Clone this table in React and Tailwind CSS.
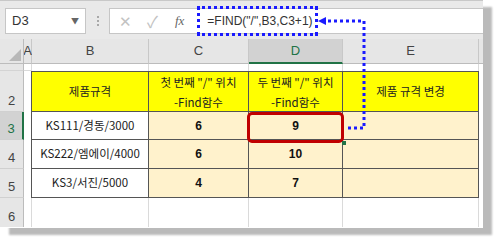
import React from 'react';

const font = { fontFamily: '"Noto Sans CJK KR", "Liberation Sans", sans-serif' };
const latin = { fontFamily: '"Liberation Sans", sans-serif' };

const cols = ['A', 'B', 'C', 'D', 'E'];
const rows = [
    { n: 2, h: 'h-[41px]' },
    { n: 3, h: 'h-[28px]' },
    { n: 4, h: 'h-[29px]' },
    { n: 5, h: 'h-[29px]' },
];

const data = [
    ['KS111/경동/3000', '6', '9'],
    ['KS222/엠에이/4000', '6', '10'],
    ['KS3/서진/5000', '4', '7'],
];

const App = () => {
    return (
        <div className="relative w-[500px] h-[241px] bg-white overflow-hidden" style={font}>
            <div className="relative w-[483px] h-[228px] bg-white border-t border-[#c8c8c8] shadow-[9px_7px_2px_rgba(0,0,0,0.27)]">
                {/* Formula bar */}
                <div className="flex items-start h-[38px] bg-[#e9e9e9] pt-[7px]">
                    <div className="ml-[5px] w-[81px] h-[26px] bg-white border border-[#c6c6c6] flex items-center justify-between px-[6px]">
                        <span className="text-[13px] text-[#333]" style={latin}>D3</span>
                        <span className="text-[8px] text-[#666]">▼</span>
                    </div>
                    <div className="w-[23px] h-[26px] flex flex-col items-center justify-center gap-[2px]">
                        <span className="w-[2px] h-[2px] bg-[#a8a8a8]" />
                        <span className="w-[2px] h-[2px] bg-[#a8a8a8]" />
                        <span className="w-[2px] h-[2px] bg-[#a8a8a8]" />
                    </div>
                    <div className="flex-1 h-[26px] bg-white border border-r-0 border-[#c6c6c6] flex items-center">
                        <span className="ml-[9px] text-[15px] text-[#c2c2c2] leading-none" style={latin}>✕</span>
                        <span className="ml-[15px] text-[16px] text-[#c2c2c2] leading-none">✓</span>
                        <span className="ml-[17px] text-[13px] text-[#666] italic" style={{ fontFamily: '"Liberation Serif", serif' }}>fx</span>
                        <span className="ml-[23px] text-[12px] text-[#333]" style={latin}>=FIND("/",B3,C3+1)</span>
                    </div>
                </div>

                {/* Sheet grid */}
                <div className="grid grid-cols-[24px_8px_117px_100px_94px_136px_4px] text-[13px]">
                    {/* column headers */}
                    <div className="relative h-[25px] bg-[#e6e6e6] border-r border-b border-[#bcbcbc]">
                        <div className="absolute right-[2px] bottom-[2px] w-0 h-0 border-l-[12px] border-l-transparent border-b-[12px] border-b-[#b8b8b8]" />
                    </div>
                    {cols.map(c => (
                        <div key={c} className={`h-[25px] flex items-center justify-center border-r border-[#c8c8c8] ${c === 'D' ? 'bg-[#d2d2d2] text-[#217346] border-b-2 border-b-[#217346]' : 'bg-[#e6e6e6] text-[#444] border-b border-b-[#bcbcbc]'}`} style={latin}>
                            {c}
                        </div>
                    ))}
                    <div className="h-[25px] bg-[#e6e6e6] border-b border-[#bcbcbc]" />

                    {/* row 1 */}
                    <div className="h-[7px] bg-[#e6e6e6] border-r border-[#bcbcbc] border-b border-b-[#d4d4d4]" />
                    <div className="h-[7px] border-r border-b border-[#dadada]" />
                    <div className="h-[7px] border-r border-[#dadada]" />
                    <div className="h-[7px] border-r border-[#dadada]" />
                    <div className="h-[7px] border-r border-[#dadada]" />
                    <div className="h-[7px] border-r border-[#dadada]" />
                    <div className="h-[7px]" />

                    {/* rows 2-5 */}
                    {rows.map((r, i) => (
                        <React.Fragment key={r.n}>
                            <div className={`${r.h} flex items-end justify-center pb-[1px] border-b border-[#d0d0d0] ${r.n === 3 ? 'bg-[#d2d2d2] text-[#217346] border-r-2 border-r-[#217346]' : 'bg-[#e6e6e6] text-[#444] border-r border-r-[#bcbcbc]'}`} style={latin}>
                                {r.n}
                            </div>
                            <div className={`${r.h} border-r border-[#555]`} />
                            {i === 0 ? (
                                <>
                                    <div className={`${r.h} bg-[#ffff00] border-r border-y border-[#555] flex items-center justify-center text-[11.5px] text-[#222]`}>제품규격</div>
                                    <div className={`${r.h} bg-[#ffff00] border-r border-y border-[#555] flex flex-col items-center justify-center text-[11.5px] leading-[20px] text-[#222]`}>
                                        <span>첫 번째 "/" 위치</span>
                                        <span>-Find함수</span>
                                    </div>
                                    <div className={`${r.h} bg-[#ffff00] border-r border-y border-[#555] flex flex-col items-center justify-center text-[11.5px] leading-[20px] text-[#222]`}>
                                        <span>두 번째 "/" 위치</span>
                                        <span>-Find함수</span>
                                    </div>
                                    <div className={`${r.h} bg-[#ffff00] border-r border-y border-[#555] flex items-center justify-center text-[11.5px] text-[#222]`}>제품 규격 변경</div>
                                </>
                            ) : (
                                <>
                                    <div className={`${r.h} bg-white border-r border-b border-[#555] flex items-center justify-center text-[11.5px] text-[#222]`}>{data[i - 1][0]}</div>
                                    <div className={`${r.h} bg-[#fff2cc] border-r border-b border-[#555] flex items-center justify-center text-[12px] font-bold text-[#111]`} style={latin}>{data[i - 1][1]}</div>
                                    <div className={`${r.h} bg-[#fff2cc] border-r border-b border-[#555] flex items-center justify-center text-[12px] font-bold text-[#111]`} style={latin}>{data[i - 1][2]}</div>
                                    <div className={`${r.h} bg-[#fff2cc] border-r border-b border-[#555]`} />
                                </>
                            )}
                            <div className={`${r.h}`} />
                        </React.Fragment>
                    ))}

                    {/* row 6 */}
                    <div className="h-[29px] bg-[#e6e6e6] border-r border-[#bcbcbc] flex items-end justify-center pb-[1px] text-[#444]" style={latin}>6</div>
                    <div className="h-[29px] border-r border-[#dadada]" />
                    <div className="h-[29px] border-r border-[#dadada]" />
                    <div className="h-[29px] border-r border-[#dadada]" />
                    <div className="h-[29px] border-r border-[#dadada]" />
                    <div className="h-[29px] border-r border-[#dadada]" />
                    <div className="h-[29px]" />
                </div>

                {/* annotations */}
                <div className="absolute left-[197px] top-[5px] w-[121px] h-[30px] border-[3px] border-dotted border-[#1a1aff]" />
                <div className="absolute left-[247px] top-[111px] w-[97px] h-[31px] border-[3px] border-[#c00000] rounded-[5px]" />
                <div className="absolute left-[342px] top-[140px] w-[4px] h-[4px] bg-[#217346]" />
                <svg className="absolute left-0 top-0" width="483" height="228">
                    <polygon points="318,20 326,16 326,24" fill="#1a1aff" />
                    <path d="M328 20 H364 V127 H346" fill="none" stroke="#1a1aff" strokeWidth="3" strokeDasharray="3 3" />
                </svg>
            </div>
        </div>
    );
};

export default App;
